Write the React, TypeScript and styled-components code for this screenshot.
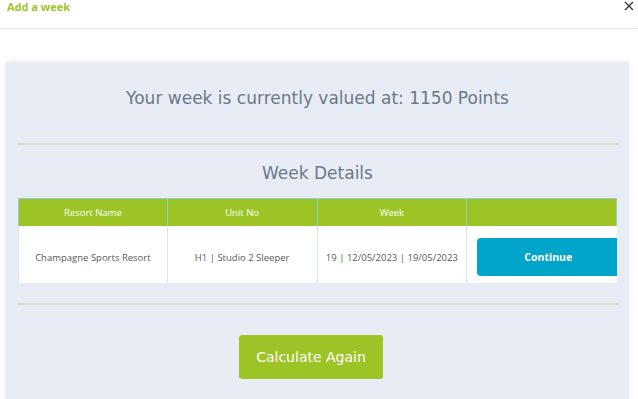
import styled, { createGlobalStyle } from 'styled-components';

const GlobalStyle = createGlobalStyle`
  html, body {
    margin: 0;
    padding: 0;
    background: #ffffff;
    overflow: hidden;
  }
  * {
    box-sizing: border-box;
  }
`;

const Page = styled.div`
  width: 638px;
  height: 399px;
  overflow: hidden;
  font-family: 'DejaVu Sans', Verdana, sans-serif;
`;

const ModalHeader = styled.div`
  height: 29px;
  display: flex;
  align-items: flex-start;
  justify-content: space-between;
  padding: 1px 4px 0 7px;
  border-bottom: 1px solid #e6e8ea;
  box-shadow: 0 1px 2px rgba(0, 0, 0, 0.04);
`;

const ModalTitle = styled.h4`
  margin: 0;
  font-family: 'Open Sans', sans-serif;
  font-weight: 700;
  font-size: 11px;
  line-height: 12px;
  color: #9cc62a;
`;

const CloseButton = styled.button`
  border: 0;
  background: none;
  padding: 0;
  width: 10px;
  height: 10px;
  cursor: pointer;
  display: flex;
`;

const Panel = styled.div`
  margin: 33px 9px 0 6px;
  padding: 0 11px 40px;
  background: #e8edf5;
  box-shadow: 0 0 7px rgba(0, 0, 0, 0.09);
`;

const Heading = styled.div<{ $top: number; $bottom: number }>`
  padding: ${p => p.$top}px 0 ${p => p.$bottom}px;
  text-align: center;
  font-size: 17px;
  line-height: 24px;
  color: #6b7887;
`;

const Divider = styled.hr`
  margin: 0;
  border: 0;
  height: 2px;
  background: #d3e3c7;
`;

const Grid = styled.div`
  display: grid;
  grid-template-columns: repeat(4, 1fr);
  margin: 0 1px 20px;
  font-family: 'Open Sans', sans-serif;
`;

const HeadCell = styled.div`
  height: 28px;
  display: flex;
  align-items: center;
  justify-content: center;
  background: #9cc425;
  color: #ffffff;
  font-size: 9.5px;
  border-top: 1px solid #8fd0cf;
  border-right: 1px solid #8fd0cf;
  &:first-child {
    border-left: 1px solid #8fd0cf;
  }
`;

const BodyCell = styled.div`
  height: 57px;
  display: flex;
  align-items: center;
  justify-content: center;
  padding-top: 5px;
  background: #ffffff;
  color: #555a60;
  font-size: 9.5px;
  overflow: hidden;
  border-right: 1px solid #dbe3ec;
  &:nth-child(5) {
    border-left: 1px solid #dbe3ec;
  }
  &:last-child {
    border-right: 0;
    justify-content: flex-start;
    padding-left: 10px;
  }
`;

const ContinueButton = styled.button`
  flex: none;
  width: 146px;
  height: 38px;
  border: 0;
  border-radius: 4px;
  background: #00a5c9;
  color: #ffffff;
  font-family: 'Open Sans', sans-serif;
  font-weight: 700;
  font-size: 10.5px;
  padding: 0 4px 0 0;
  cursor: pointer;
`;

const Actions = styled.div`
  display: flex;
  justify-content: center;
  padding: 30px 13px 0 0;
`;

const CalcButton = styled.button`
  width: 144px;
  height: 44px;
  border: 0;
  border-radius: 3px;
  background: #9dc426;
  color: #ffffff;
  font-family: 'DejaVu Sans', Verdana, sans-serif;
  font-size: 14px;
  cursor: pointer;
`;

const columns = ['Resort Name', 'Unit No', 'Week', ''];
const row = ['Champagne Sports Resort', 'H1 | Studio 2 Sleeper', '19 | 12/05/2023 | 19/05/2023'];

export default function App() {
  return (
    <Page>
      <GlobalStyle />
      <ModalHeader>
        <ModalTitle>Add a week</ModalTitle>
        <CloseButton aria-label='close'>
          <svg width='10' height='10' viewBox='0 0 10 10'>
            <path d='M1 1 L9 9 M9 1 L1 9' stroke='#333' strokeWidth='1.3' />
          </svg>
        </CloseButton>
      </ModalHeader>

      <Panel>
        <Heading $top={24} $bottom={33}>
          Your week is currently valued at: 1150 Points
        </Heading>
        <Divider />
        <Heading $top={16} $bottom={13}>
          Week Details
        </Heading>
        <Grid>
          {columns.map((c, i) => (
            <HeadCell key={i}>{c}</HeadCell>
          ))}
          {row.map((c, i) => (
            <BodyCell key={i}>{c}</BodyCell>
          ))}
          <BodyCell>
            <ContinueButton>Continue</ContinueButton>
          </BodyCell>
        </Grid>
        <Divider />
        <Actions>
          <CalcButton>Calculate Again</CalcButton>
        </Actions>
      </Panel>
    </Page>
  );
}
